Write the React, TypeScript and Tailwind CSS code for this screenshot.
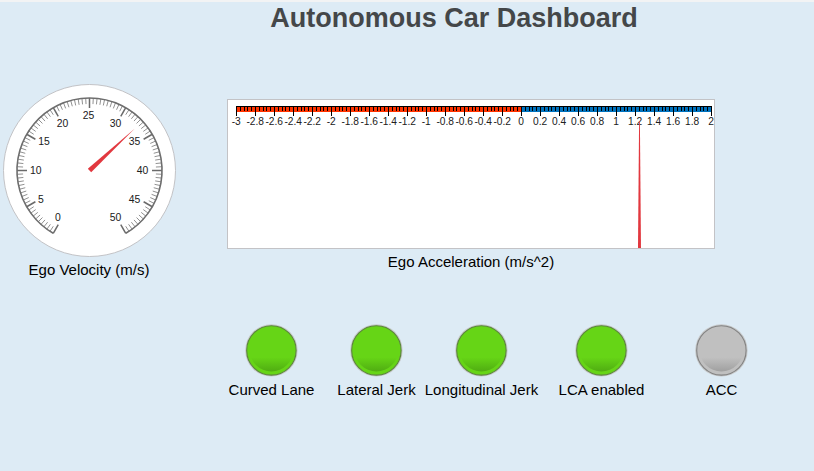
import React from "react";

const CX = 89.5;
const CY = 170.5 - 84;

// Label centres around the dial, from 0 to 50 in steps of 5.
const DIAL_LABELS = [
  [57.8, 133.5],
  [40.8, 115.5],
  [35.8, 86.5],
  [44, 57.5],
  [62.5, 39.5],
  [88.5, 31.5],
  [115.5, 39.5],
  [134.6, 57.5],
  [142.6, 86.5],
  [134.6, 115.5],
  [115.5, 133.5],
];

function polar(r: number, deg: number) {
  const a = (deg * Math.PI) / 180;
  return { x: CX + r * Math.sin(a), y: CY - r * Math.cos(a) };
}

function VelocityGauge({ value }: { value: number }) {
  const start = polar(72.5, 210);
  const end = polar(72.5, 150);
  const tip = polar(61.5, 210 + value * 6);
  const left = polar(2.5, 210 + value * 6 - 90);
  const right = polar(2.5, 210 + value * 6 + 90);
  return (
    <svg className="block h-[174px] w-[180px]" viewBox="0 0 180 174">
      <circle cx={CX} cy={CY} r={86} fill="#fff" stroke="#c3c3c6" />
      {Array.from({ length: 101 }, (_, i) => {
        const major = i % 10 === 0;
        const a = polar(72.5, 210 + i * 3);
        const b = polar(major ? 62.5 : 66.5, 210 + i * 3);
        return (
          <line key={i} x1={a.x} y1={a.y} x2={b.x} y2={b.y} stroke={major ? "#6a6a6a" : "#858585"} strokeWidth={major ? 1.5 : 0.9} />
        );
      })}
      <path d={`M${start.x} ${start.y}A72.5 72.5 0 1 1 ${end.x} ${end.y}`} fill="none" stroke="#6e6e6e" strokeWidth={1.6} />
      {DIAL_LABELS.map(([x, y], i) => (
        <text key={i} x={x} y={y + 3.5} textAnchor="middle" fill="#202020" className="font-['Liberation_Sans',Arial,sans-serif] text-[10.4px]">
          {i * 5}
        </text>
      ))}
      <path d={`M${left.x} ${left.y}L${tip.x} ${tip.y}L${right.x} ${right.y}Z`} fill="#e2383f" />
    </svg>
  );
}

function AccelerationGauge({ value }: { value: number }) {
  const x = 9.5 + (value + 3) * 95;
  return (
    <svg className="block h-[150px] w-[488px]" viewBox="0 0 488 150">
      <rect x={0.5} y={0.5} width={487} height={149} fill="#fff" stroke="#c3c3c6" />
      <rect x={9} y={8} width={285} height={5} fill="#ff3300" />
      <rect x={294} y={8} width={191} height={5} fill="#0072bd" />
      <path d="M9 7.5H485" stroke="#000" />
      {Array.from({ length: 126 }, (_, i) => (
        <rect key={i} x={Math.round(9 + i * 3.8)} y={7} width={1} height={i % 5 === 0 ? 10 : 5} fill="#000" />
      ))}
      {Array.from({ length: 26 }, (_, i) => (
        <text key={i} x={9.2 + i * 19} y={26} textAnchor="middle" fill="#202020" className="font-['Liberation_Sans',Arial,sans-serif] text-[10.2px]">
          {Number((-3 + i * 0.2).toFixed(1))}
        </text>
      ))}
      <path d={`M${x - 0.4} 22L${x - 1.5} 149H${x + 1.5}L${x + 0.4} 22Z`} fill="#e2383f" />
    </svg>
  );
}

function Lamp({ label, on, className }: { label: string; on: boolean; className: string }) {
  const id = on ? "lamp-on" : "lamp-off";
  return (
    <div className={`flex flex-col items-center ${className}`}>
      <svg className="block h-[54px] w-[54px]" viewBox="0 0 54 54">
        <defs>
          <linearGradient id={id} x1="0" y1="0" x2="0" y2="1">
            <stop offset="0.68" stopColor={on ? "#66d516" : "#c0c0c0"} />
            <stop offset="1" stopColor={on ? "#50ad12" : "#a0a0a0"} />
          </linearGradient>
        </defs>
        <circle cx={26.4} cy={27.4} r={26.2} fill="#c6c8c9" />
        <circle cx={26.4} cy={27.4} r={24.7} fill={on ? "#66d516" : "#c0c0c0"} stroke={on ? "#5a863b" : "#828282"} strokeWidth={1.1} />
        <circle cx={26.4} cy={26.4} r={22} fill={`url(#${id})`} />
      </svg>
      <span className="mt-1 whitespace-nowrap text-[15px] leading-[18px]">{label}</span>
    </div>
  );
}

export default function App() {
  return (
    <main className="h-[471px] w-[814px] overflow-hidden border-t-2 border-[#f2f3f4] bg-[#ddebf5] font-['Liberation_Sans',Arial,sans-serif] text-black">
      <h1 className="ml-[94px] h-[82px] text-center text-[27px] leading-[32px] font-bold text-[#444749]">
        Autonomous Car Dashboard
      </h1>
      <div className="flex h-[239px]">
        <section className="w-[227px]">
          <VelocityGauge value={32.85} />
          <p className="mt-[3px] w-[178px] text-center text-[15px] leading-[18px]">Ego Velocity (m/s)</p>
        </section>
        <section className="w-[488px] pt-[15px]">
          <AccelerationGauge value={1.242} />
          <p className="mt-1 text-center text-[15px] leading-[18px]">Ego Acceleration (m/s^2)</p>
        </section>
      </div>
      <div className="flex pl-[211.5px]">
        <Lamp label="Curved Lane" on className="w-[120px]" />
        <Lamp label="Lateral Jerk" on className="w-[90px]" />
        <Lamp label="Longitudinal Jerk" on className="w-[120px]" />
        <Lamp label="LCA enabled" on className="w-[120px]" />
        <Lamp label="ACC" on={false} className="w-[120px]" />
      </div>
    </main>
  );
}
